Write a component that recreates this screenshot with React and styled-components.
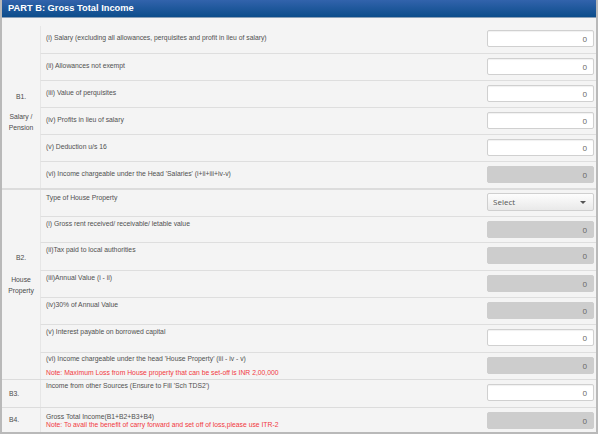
import React from "react";
import styled, { createGlobalStyle } from "styled-components";

const GlobalStyle = createGlobalStyle`
  html, body {
    margin: 0;
    padding: 0;
    background: #ffffff;
  }
  body {
    font-family: Arial, "Liberation Sans", sans-serif;
  }
`;

const Panel = styled.div`
  width: 598px;
  height: 434px;
  box-sizing: border-box;
  border-left: 2px solid #b9b9b9;
  border-right: 2px solid #b9b9b9;
  border-bottom: 2px solid #b9b9b9;
  background: #f4f4f4;
  display: flex;
  flex-direction: column;
  overflow: hidden;
`;

const Header = styled.div`
  height: 17px;
  margin-left: -2px;
  margin-right: -2px;
  background: linear-gradient(#3263ac, #0c4d8b);
  border-bottom: 1px solid #8aa0b8;
  color: #ffffff;
  font-family: "Liberation Sans", Arial, sans-serif;
  font-weight: bold;
  font-size: 9.3px;
  line-height: 17px;
  padding-left: 8px;
  flex: none;
`;

const Section = styled.div`
  display: flex;
  border-top: ${(p) => (p.$double ? "2px solid #dcdcdc" : p.$line ? "1px solid #dcdcdc" : "none")};
  padding-top: ${(p) => p.$pad || 0}px;
  flex: none;
`;

const Code = styled.div`
  width: 38px;
  flex: none;
  padding-top: ${(p) => p.$offset}px;
  padding-left: ${(p) => (p.$left ? 7 : 0)}px;
  box-sizing: border-box;
  text-align: ${(p) => (p.$left ? "left" : "center")};
  font-size: 6.8px;
  color: #4a4a4a;
  line-height: 11px;
`;

const CodeNum = styled.div`
  margin-bottom: ${(p) => p.$gap || 0}px;
`;

const Rows = styled.div`
  flex: 1;
  display: flex;
  flex-direction: column;
`;

const Row = styled.div`
  height: ${(p) => p.$h || 27}px;
  box-sizing: border-box;
  display: flex;
  align-items: flex-start;
  border-top: ${(p) => (p.$first ? "none" : "1px solid #dedede")};
  border-left: 1px solid #e6e6e6;
  padding-right: 2px;
`;

const Label = styled.div`
  flex: 1;
  padding-left: 5px;
  padding-top: ${(p) => p.$top}px;
  font-size: 6.8px;
  line-height: 9px;
  color: #505050;
`;

const Note = styled.div`
  color: #f2383e;
  margin-top: ${(p) => p.$mt}px;
`;

const Field = styled.div`
  width: 107px;
  height: 17px;
  margin-top: 4px;
  box-sizing: border-box;
  border-radius: 2px;
  border: 1px solid ${(p) => (p.$disabled ? "#cdcdcd" : "#d0d0d0")};
  background: ${(p) => (p.$disabled ? "#cdcdcd" : "#ffffff")};
  box-shadow: ${(p) => (p.$disabled ? "none" : "inset 0 1px 1px rgba(0,0,0,0.06)")};
  font-family: "Open Sans", "DejaVu Sans", sans-serif;
  font-size: 8px;
  color: #666;
  text-align: right;
  line-height: 15px;
  padding-right: 6px;
  flex: none;
`;

const Select = styled.div`
  width: 107px;
  height: 18px;
  margin-top: 3px;
  box-sizing: border-box;
  border-radius: 2px;
  border: 1px solid #cfcfcf;
  background: linear-gradient(#fdfdfd, #e9e9e9);
  font-family: "Open Sans", "DejaVu Sans", sans-serif;
  font-size: 8px;
  color: #555;
  line-height: 16px;
  padding: 0 7px 0 5px;
  display: flex;
  justify-content: space-between;
  align-items: center;
  flex: none;
`;

const Caret = styled.span`
  width: 0;
  height: 0;
  border-left: 3px solid transparent;
  border-right: 3px solid transparent;
  border-top: 3px solid #555;
`;

const InputRow = ({ label, top, disabled, first, h, note, noteMt = 5, select }) => (
  <Row $first={first} $h={h}>
    <Label $top={top}>
      {label}
      {note && <Note $mt={noteMt}>{note}</Note>}
    </Label>
    {select ? (
      <Select>
        Select
        <Caret />
      </Select>
    ) : (
      <Field $disabled={disabled}>0</Field>
    )}
  </Row>
);

export default function App() {
  return (
    <>
      <GlobalStyle />
      <Panel>
        <Header>PART B: Gross Total Income</Header>

        <Section $pad={8}>
          <Code $offset={65}>
            <CodeNum $gap={9}>B1.</CodeNum>
            <div>Salary /</div>
            <div>Pension</div>
          </Code>
          <Rows>
            <InputRow first top={7} label="(i)  Salary (excluding all allowances, perquisites and profit in lieu of salary)" />
            <InputRow top={7} label="(ii)  Allowances not exempt" />
            <InputRow top={7} label="(iii)  Value of perquisites" />
            <InputRow top={7} label="(iv)  Profits in lieu of salary" />
            <InputRow top={7} label="(v)  Deduction u/s 16" />
            <InputRow top={7} disabled label="(vi) Income chargeable under the Head 'Salaries' (i+ii+iii+iv-v)" />
          </Rows>
        </Section>

        <Section $double>
          <Code $offset={62}>
            <CodeNum $gap={11}>B2.</CodeNum>
            <div>House</div>
            <div>Property</div>
          </Code>
          <Rows>
            <InputRow first h={26} top={3} select label="Type of House Property" />
            <InputRow h={26} top={2} disabled label="(i) Gross rent received/ receivable/ letable value" />
            <InputRow h={28} top={2} disabled label="(ii)Tax paid to local authorities" />
            <InputRow top={2} disabled label="(iii)Annual Value (i - ii)" />
            <InputRow top={2} disabled label="(iv)30% of Annual Value" />
            <InputRow h={28} top={2} label="(v) Interest payable on borrowed capital" />
            <InputRow
              top={1}
              disabled
              label="(vi) Income chargeable under the head 'House Property' (iii - iv - v)"
              note="Note: Maximum Loss from House property that can be set-off is INR 2,00,000"
            />
          </Rows>
        </Section>

        <Section $line>
          <Code $left $offset={8}>B3.</Code>
          <Rows>
            <InputRow first top={1} label="Income from other Sources (Ensure to Fill 'Sch TDS2')" />
          </Rows>
        </Section>

        <Section $line>
          <Code $left $offset={6}>B4.</Code>
          <Rows>
            <InputRow
              first
              h={24}
              top={4}
              disabled
              label="Gross Total Income(B1+B2+B3+B4)"
              note="Note: To avail the benefit of carry forward and set off of loss,please use ITR-2"
              noteMt={-1}
            />
          </Rows>
        </Section>
      </Panel>
    </>
  );
}
